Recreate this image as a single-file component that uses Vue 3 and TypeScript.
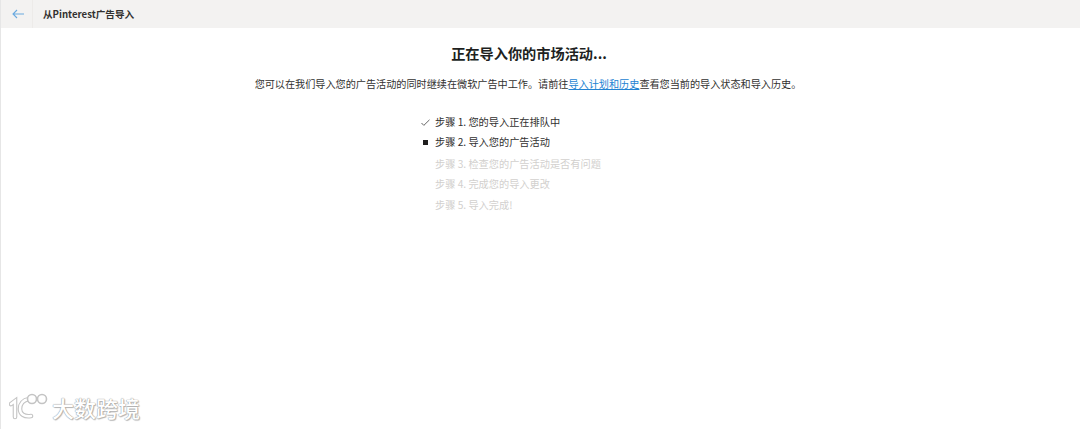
<script setup lang="ts">
interface Step { label: string; state: 'done' | 'active' | 'todo' }
const steps: Step[] = [
  { label: '步骤 1. 您的导入正在排队中', state: 'done' },
  { label: '步骤 2. 导入您的广告活动', state: 'active' },
  { label: '步骤 3. 检查您的广告活动是否有问题', state: 'todo' },
  { label: '步骤 4. 完成您的导入更改', state: 'todo' },
  { label: '步骤 5. 导入完成!', state: 'todo' },
]
</script>

<template>
  <div class="page">
    <header class="bar">
      <div class="back">
        <svg width="12" height="10" viewBox="0 0 12 10" fill="none" stroke="#6aa9e0" stroke-width="1.1">
          <path d="M12 5H1M5 1 1 5l4 4" />
        </svg>
      </div>
      <span class="crumb">从Pinterest广告导入</span>
    </header>
    <main class="body">
      <h1>正在导入你的市场活动...</h1>
      <p class="desc">您可以在我们导入您的广告活动的同时继续在微软广告中工作。请前往<a>导入计划和历史</a>查看您当前的导入状态和导入历史。</p>
      <ul class="steps">
        <li v-for="s in steps" :key="s.label" :class="s.state">
          <span class="mark">
            <svg v-if="s.state === 'done'" width="9" height="7" viewBox="0 0 9 7" fill="none" stroke="#555" stroke-width="0.9">
              <path d="M0.5 4 2.8 6.4 8.5 0.8" />
            </svg>
            <i v-else-if="s.state === 'active'"></i>
          </span>
          <span class="text">{{ s.label }}</span>
        </li>
      </ul>
    </main>
    <div class="watermark">
      <svg width="42" height="30" viewBox="0 0 42 30" fill="none">
        <g stroke="#c4c4c4" stroke-width="4.6" stroke-linecap="round">
          <path d="M2 12 6 9V25M20 7C14 8 11 12 11 17S15 25 22 24" />
        </g>
        <g stroke="#fff" stroke-width="2.4" stroke-linecap="round">
          <path d="M2 12 6 9V25M20 7C14 8 11 12 11 17S15 25 22 24" />
        </g>
        <circle cx="23" cy="7" r="4.5" stroke="#c4c4c4" stroke-width="1.6" fill="#fff" />
        <circle cx="33" cy="7" r="4.5" stroke="#c4c4c4" stroke-width="1.6" fill="#fff" />
      </svg>
      <span class="wm-text">大数跨境</span>
    </div>
  </div>
</template>

<style scoped>
.page {
  position: relative;
  width: 1080px;
  height: 429px;
  overflow: hidden;
  background: #fff;
  font-family: "Noto Sans CJK SC", "Noto Sans", sans-serif;
  box-sizing: border-box;
  border-left: 1px solid #e6e6e6;
}
.bar {
  height: 28px;
  background: #f3f2f1;
  display: flex;
  align-items: center;
}
.back {
  width: 32px;
  height: 28px;
  padding-left: 2px;
  display: flex;
  align-items: center;
  justify-content: center;
  border-right: 1px solid #edebe9;
  box-sizing: border-box;
}
.crumb {
  margin-left: 10px;
  font-size: 9.6px;
  font-weight: 700;
  color: #323130;
}
.body {
  display: flex;
  flex-direction: column;
  align-items: center;
  padding-right: 25px;
}
h1 {
  margin: 14px 0 0;
  font-size: 14.2px;
  line-height: 22px;
  font-weight: 700;
  color: #201f1e;
  margin-left: 2px;
}
.desc {
  margin: 11px 0 0;
  font-size: 10.13px;
  line-height: 18px;
  color: #323130;
}
.desc a {
  color: #2383d2;
  text-decoration: underline;
}
.steps {
  list-style: none;
  margin: 18px 0 0;
  padding: 0;
  align-self: flex-start;
  margin-left: 418px;
}
.steps li {
  display: flex;
  align-items: center;
  height: 20.4px;
  font-size: 10.2px;
  color: #323130;
  white-space: nowrap;
}
.steps li.active {
  margin-bottom: 1.5px;
}
.steps li.todo {
  color: #d2d0ce;
}
.mark {
  width: 16px;
  padding-top: 2px;
  padding-right: 4px;
  box-sizing: border-box;
  display: flex;
  align-items: center;
  justify-content: center;
  flex: none;
}
.mark i {
  display: block;
  width: 5px;
  height: 5px;
  background: #201f1e;
}
.watermark {
  position: absolute;
  left: 8px;
  bottom: 7px;
  display: flex;
  align-items: center;
  gap: 1px;
}
.wm-text {
  color: #fff;
  font-size: 22px;
  font-weight: 500;
  line-height: 30px;
  text-shadow: 0 0 1px #999, 0 0 1px #999, 1px 1px 1px #bbb;
}
</style>
